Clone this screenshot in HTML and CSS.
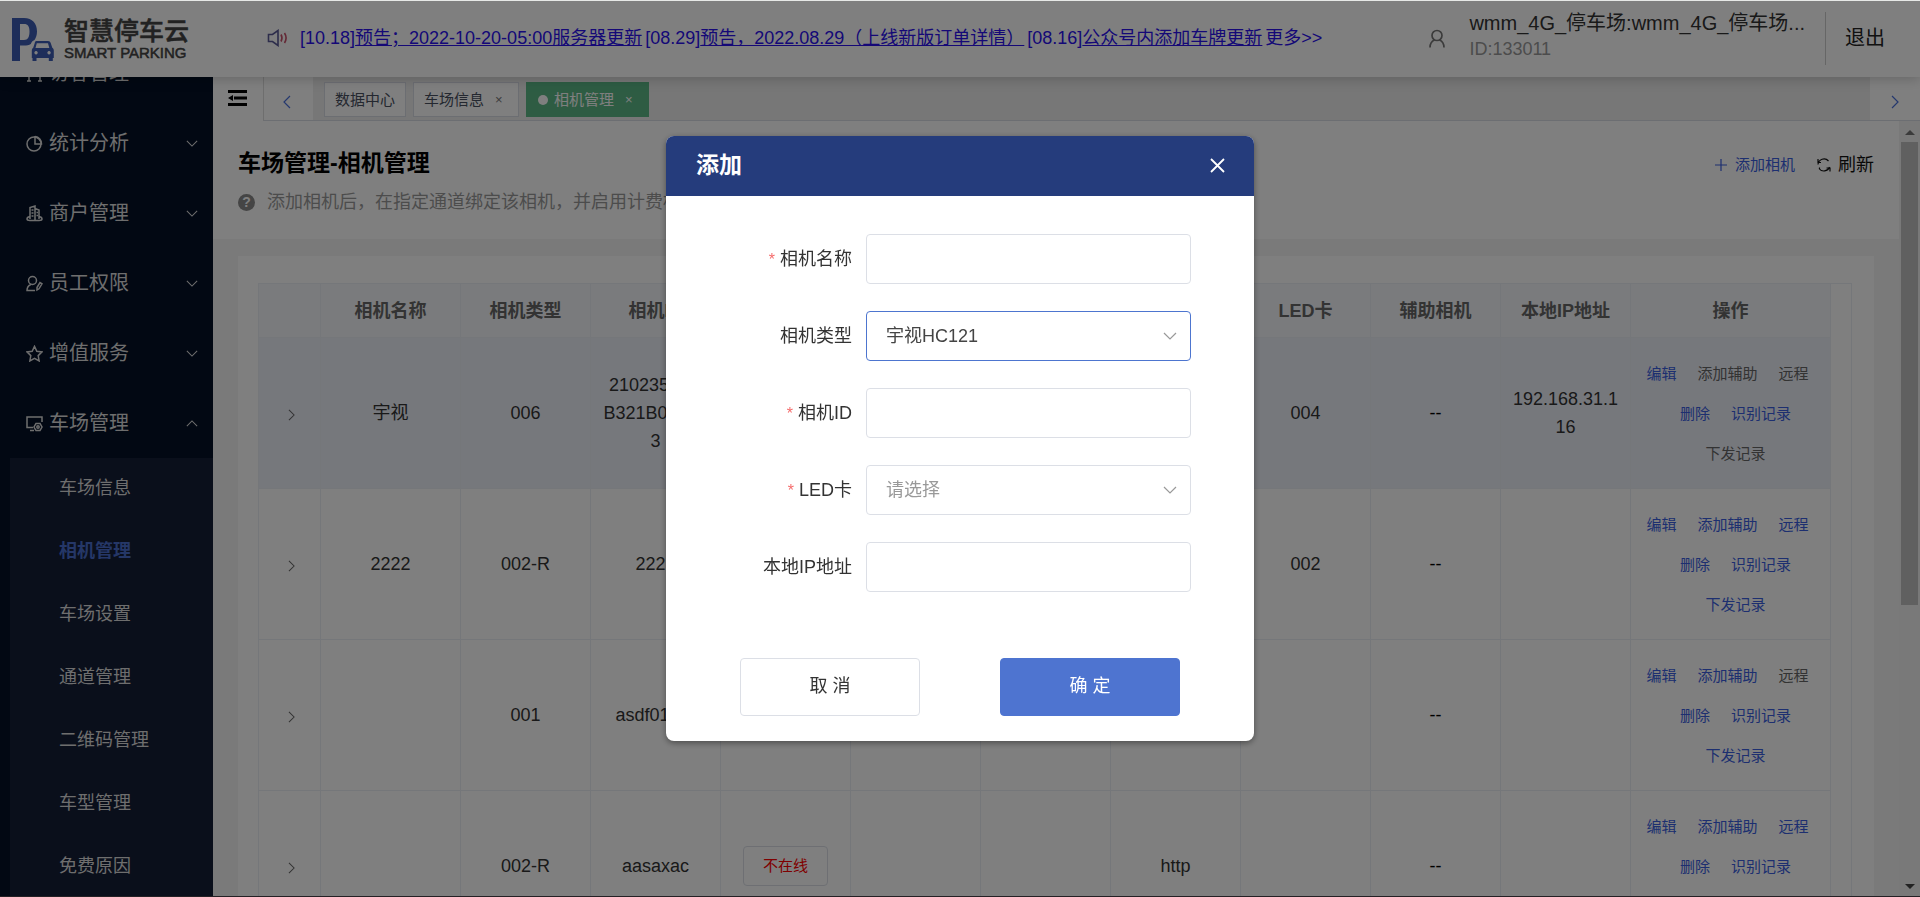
FILE: index.html
```html
<!DOCTYPE html>
<html lang="zh-CN">
<head>
<meta charset="utf-8">
<title>智慧停车云 - 相机管理</title>
<link rel="stylesheet" href="styles.css">
</head>
<body>
<svg class="defs" aria-hidden="true">
  <symbol id="chevron" viewBox="0 0 14 8"><path d="M1 1l6 6 6-6" fill="none" stroke="currentColor" stroke-width="1.2"/></symbol>
  <symbol id="angle" viewBox="0 0 8 14"><path d="M1 1l6 6-6 6" fill="none" stroke="currentColor" stroke-width="1.2"/></symbol>
</svg>

<header class="topbar">
  <a class="logo" href="#">
    <svg class="logo-mark" viewBox="0 0 42 44">
      <path fill="#3d5db5" fill-rule="evenodd" d="M0 0h12c8.500 0 13 5.500 13 13.500 0 3.500-1 6.500-2.500 8.500-2 .8-3 2-3.700 4-1.800 1-4 1.500-6.800 1.500H8V43H0zM8 6v16h4c4 0 5.500-3.500 5.500-8.500S16 6 12 6z"/>
      <path fill="#3d5db5" fill-rule="evenodd" d="M24 23h12c1.500 0 2.300.8 2.800 2.200l1.500 4.600c1 .7 1.500 1.700 1.500 3V40h-1v3h-4v-3H24.500v3h-4v-3h-.7v-7.200c0-1.300.5-2.300 1.400-3l1.500-4.600c.3-1.400 1-2.200 1.300-2.200zm.8 2.300L23.500 30h13.800L36 25.300zM24 33a1.700 1.700 0 1 0 .1 0zm13 0a1.700 1.700 0 1 0 .1 0z"/>
    </svg>
    <span class="logo-text"><strong>智慧停车云</strong><span>SMART PARKING</span></span>
  </a>
  <div class="notices">
    <svg class="speaker" viewBox="0 0 22 18">
      <path d="M1.500 5.500h4L11 1.500v15L5.500 12.500h-4z" fill="none" stroke="#5a5a96" stroke-width="1.600"/>
      <path d="M14 5.500q2 3.500 0 7M17.500 4q3.200 5 0 10" fill="none" stroke="#c8506a" stroke-width="1.600"/>
    </svg>
    <a href="#">[10.18]<u>预告；2022-10-20-05:00服务器更新</u></a>
    <a href="#">[08.29]<u>预告，2022.08.29（上线新版订单详情）</u></a>
    <a href="#">[08.16]<u>公众号内添加车牌更新</u></a>
    <a href="#">更多&gt;&gt;</a>
  </div>
  <div class="account">
    <svg class="user" viewBox="0 0 16 19"><circle cx="8" cy="6.500" r="5" fill="none" stroke="currentColor" stroke-width="1.700"/><path d="M5.500 11Q1 13 1 18.500M10.500 11Q15 13 15 18.500" fill="none" stroke="currentColor" stroke-width="1.700"/></svg>
    <div class="account-text"><span class="account-name">wmm_4G_停车场:wmm_4G_停车场...</span><span class="account-id">ID:133011</span></div>
    <a class="logout" href="#">退出</a>
  </div>
</header>

<div class="shell">
  <nav class="sidebar">
    <ul class="menu">
      <li><a class="menu-item" href="#"><svg class="menu-icon" viewBox="0 0 17 17"><path d="M3 16V4h11v12M1 16h4M12 16h4" /></svg><span>访客管理</span><svg class="caret"><use href="#chevron"/></svg></a></li>
      <li><a class="menu-item" href="#"><svg class="menu-icon" viewBox="0 0 17 17"><circle cx="8" cy="9" r="7"/><path d="M9 1v8h6.500A7 7 0 0 0 9 1.500"/></svg><span>统计分析</span><svg class="caret"><use href="#chevron"/></svg></a></li>
      <li><a class="menu-item" href="#"><svg class="menu-icon" viewBox="0 0 17 17"><path d="M4 14V2.500L9 1v14M9 3.500l4 1.500V14M4 11.500Q1 12 1 14q0 1.500 3 1.500h9q3 0 3-1.500 0-2-3-2.500M5.500 5h2M5.500 8h2M5.500 11h2M10.500 7.500h1.500M10.500 10.500h1.500"/></svg><span>商户管理</span><svg class="caret"><use href="#chevron"/></svg></a></li>
      <li><a class="menu-item" href="#"><svg class="menu-icon" viewBox="0 0 17 17"><circle cx="6.500" cy="5.500" r="4"/><path d="M5 9.500Q1 11 1 15.500h8M11 12.500l3-5 2 1.300-3 5-2 1.200z"/></svg><span>员工权限</span><svg class="caret"><use href="#chevron"/></svg></a></li>
      <li><a class="menu-item" href="#"><svg class="menu-icon" viewBox="0 0 17 17"><path d="M8.500 1.300l2.300 4.900 5.200.7-3.800 3.700.9 5.300-4.600-2.600-4.600 2.600.9-5.300L1 6.900l5.200-.7z"/></svg><span>增值服务</span><svg class="caret"><use href="#chevron"/></svg></a></li>
      <li><a class="menu-item" href="#"><svg class="menu-icon" viewBox="0 0 17 17"><path d="M16 7V2H1v10.500h6M4 15.500h4"/><path d="M10 8.500h4l2 3.500-2 3.500h-4L8 12z"/><circle cx="12" cy="12" r="1.200"/></svg><span>车场管理</span><svg class="caret caret-up"><use href="#chevron"/></svg></a>
        <ul class="submenu">
          <li><a href="#">车场信息</a></li>
          <li><a class="current" href="#">相机管理</a></li>
          <li><a href="#">车场设置</a></li>
          <li><a href="#">通道管理</a></li>
          <li><a href="#">二维码管理</a></li>
          <li><a href="#">车型管理</a></li>
          <li><a href="#">免费原因</a></li>
        </ul>
      </li>
    </ul>
  </nav>

  <div class="workspace">
    <div class="tabbar">
      <button class="fold" aria-label="收起菜单"><svg viewBox="0 0 19 16"><path d="M0 0h19v3H0zM6 6.500h13v3H6zM0 13h19v3H0zM0 8l5-3v6z"/></svg></button>
      <button class="tab-nav tab-prev" aria-label="向左"><svg><use href="#angle"/></svg></button>
      <div class="tabs">
        <a class="tab" href="#">数据中心</a>
        <a class="tab" href="#">车场信息<span class="tab-close">×</span></a>
        <a class="tab tab-active" href="#"><i class="dot"></i>相机管理<span class="tab-close">×</span></a>
      </div>
      <button class="tab-nav" aria-label="向右"><svg><use href="#angle"/></svg></button>
    </div>

    <div class="viewport">
      <main class="page">
        <section class="page-head">
          <div>
            <h1>车场管理-相机管理</h1>
            <p class="hint"><span class="hint-icon">?</span>添加相机后，在指定通道绑定该相机，并启用计费标准</p>
          </div>
          <div class="page-actions">
            <button class="add"><svg viewBox="0 0 14 14"><path d="M7 1v12M1 7h12"/></svg>添加相机</button>
            <button class="refresh"><svg viewBox="0 0 14 14"><path d="M2.500 12V9.500M12.500 9A6 6 0 0 1 2 10.500M1 6.500A6 6 0 0 1 11.500 3M1 1v3.500h3M13 13.500V10H9.500"/></svg>刷新</button>
          </div>
        </section>

        <section class="card">
          <div class="table-wrap">
            <table>
              <colgroup><col class="col-expand"><col class="col-name"><col span="9"><col class="col-ops"></colgroup>
              <thead>
                <tr><th></th><th>相机名称</th><th>相机类型</th><th>相机ID</th><th></th><th></th><th></th><th></th><th>LED卡</th><th>辅助相机</th><th>本地IP地址</th><th>操作</th></tr>
              </thead>
              <tbody>
                <tr class="hovered">
                  <td><svg class="expand"><use href="#angle"/></svg></td><td>宇视</td><td>006</td><td>210235TK3<br>B321B00013<br>3</td><td></td><td></td><td></td><td></td><td>004</td><td class="none">--</td><td>192.168.31.116</td>
                  <td class="ops"><div class="op-row"><button>编辑</button><button disabled>添加辅助</button><button disabled>远程</button></div><div class="op-row op-more"><button>删除</button><button>识别记录</button></div><div class="op-row op-more"><button disabled>下发记录</button></div></td>
                </tr>
                <tr>
                  <td><svg class="expand"><use href="#angle"/></svg></td><td>2222</td><td>002-R</td><td>2222</td><td></td><td></td><td></td><td></td><td>002</td><td class="none">--</td><td></td>
                  <td class="ops"><div class="op-row"><button>编辑</button><button>添加辅助</button><button>远程</button></div><div class="op-row op-more"><button>删除</button><button>识别记录</button></div><div class="op-row op-more"><button>下发记录</button></div></td>
                </tr>
                <tr>
                  <td><svg class="expand"><use href="#angle"/></svg></td><td></td><td>001</td><td>asdf01111</td><td></td><td></td><td></td><td></td><td></td><td class="none">--</td><td></td>
                  <td class="ops"><div class="op-row"><button>编辑</button><button>添加辅助</button><button disabled>远程</button></div><div class="op-row op-more"><button>删除</button><button>识别记录</button></div><div class="op-row op-more"><button>下发记录</button></div></td>
                </tr>
                <tr>
                  <td><svg class="expand"><use href="#angle"/></svg></td><td></td><td>002-R</td><td>aasaxac</td><td><span class="offline">不在线</span></td><td></td><td></td><td>http</td><td></td><td class="none">--</td><td></td>
                  <td class="ops"><div class="op-row"><button>编辑</button><button>添加辅助</button><button>远程</button></div><div class="op-row op-more"><button>删除</button><button>识别记录</button></div></td>
                </tr>
              </tbody>
            </table>
          </div>
        </section>
      </main>
      <div class="scrollbar" aria-hidden="true">
        <i class="arrow-up"></i>
        <div class="track"><div class="thumb"></div></div>
        <i class="arrow-down"></i>
      </div>
    </div>
  </div>
</div>

<div class="overlay">
  <form class="dialog" role="dialog" aria-labelledby="dialog-title">
    <div class="dialog-head">
      <h2 id="dialog-title">添加</h2>
      <button type="button" class="close" aria-label="关闭"><svg viewBox="0 0 15 15"><path d="M1 1l13 13M14 1L1 14"/></svg></button>
    </div>
    <div class="fields">
      <label class="required" for="cam-name">相机名称</label>
      <input id="cam-name" type="text">
      <label for="cam-type">相机类型</label>
      <div class="select-box">
        <select id="cam-type" class="focused"><option>宇视HC121</option></select>
        <svg><use href="#chevron"/></svg>
      </div>
      <label class="required" for="cam-id">相机ID</label>
      <input id="cam-id" type="text">
      <label class="required" for="led">LED卡</label>
      <div class="select-box">
        <select id="led" class="placeholder"><option>请选择</option></select>
        <svg><use href="#chevron"/></svg>
      </div>
      <label for="local-ip">本地IP地址</label>
      <input id="local-ip" type="text">
    </div>
    <div class="dialog-foot">
      <button type="button">取 消</button>
      <button type="button" class="primary">确 定</button>
    </div>
  </form>
</div>
</body>
</html>
```

FILE: styles.css
```css
* { box-sizing: border-box; }

body {
  margin: 0;
  height: 100vh;
  display: flex;
  flex-direction: column;
  overflow: hidden;
  border-top: 1px solid #e6e8e6;
  border-bottom: 1px solid #242024;
  background: #fff;
  color: #333;
  font: 18px/28px "Liberation Sans", "Noto Sans CJK SC", sans-serif;
}

ul { list-style: none; margin: 0; padding: 0; }
h1, h2, p { margin: 0; }
a { color: inherit; text-decoration: none; }
button { border: 0; padding: 0; background: none; font: inherit; color: inherit; }
.defs { display: none; }

/* Top bar */
.topbar {
  z-index: 1;
  flex: none;
  display: flex;
  align-items: center;
  height: 76px;
  padding-left: 12px;
  background: #fff;
  box-shadow: 0 2px 12px rgba(0, 0, 0, .2);
}
.logo { display: flex; align-items: center; gap: 10px; width: 255px; padding-top: 2px; }
.logo-mark { width: 42px; height: 44px; }
.logo-text { display: flex; flex-direction: column; color: #444; font-size: 15px; line-height: 18px; -webkit-text-stroke: 0.5px; }
.logo-text strong { font-size: 25px; line-height: 26px; font-weight: 500; }
.notices { display: flex; align-items: center; gap: 3px; color: #2a10ee; white-space: nowrap; padding-bottom: 2px; }
.speaker { width: 22px; height: 18px; margin-right: 8px; }
.account { display: flex; align-items: center; gap: 24px; margin-left: auto; padding-bottom: 2px; }
.user { width: 16px; height: 19px; color: #777; }
.account-text { display: flex; flex-direction: column; line-height: 26px; padding-bottom: 5px; white-space: nowrap; }
.account-name { font-size: 20px; color: #333; }
.account-id { color: #999; }
.logout { padding: 12px 35px 13px 19px; border-left: 1px solid #ccc; font-size: 20px; margin-left: -4px; color: #222; }

.shell { flex: 1; min-height: 0; display: flex; }

/* Side menu */
.sidebar { flex: none; width: 213px; overflow: hidden; background: #041026; color: #ddd; }
.menu { margin-top: -39px; }
.menu-item { display: flex; align-items: center; gap: 6px; height: 70px; padding: 0 15px 0 26px; font-size: 20px; }
.menu-icon { width: 17px; height: 17px; fill: none; stroke: currentColor; stroke-width: 1.5; }
.caret { width: 12px; height: 7px; margin-left: auto; }
.caret-up { transform: rotate(180deg); }
.submenu { margin-left: 10px; background: #141e36; display: grid; gap: 5px; padding: 1px 0 40px; }
.submenu a { display: block; padding-left: 49px; line-height: 58px; }
.submenu .current { color: #4a6fcf; font-weight: bold; }

/* Tabs */
.workspace { flex: 1; min-width: 0; display: flex; flex-direction: column; }
.tabbar { flex: none; display: flex; height: 44px; }
.fold { width: 50px; display: grid; place-content: start center; padding: 13px 1px 0 0; }
.fold svg { width: 19px; height: 16px; fill: #000; }
.tab-nav { width: 50px; display: grid; place-content: center; border-bottom: 1px solid #d8dce5; color: #4a70dc; }
.tab-nav svg { width: 8px; height: 14px; margin-top: 7px; }
.tab-prev { border-left: 1px solid #ddd; padding-right: 3px; }
.tab-prev svg { transform: rotate(180deg); }
.tabs { flex: 1; display: flex; gap: 7px; padding: 5px 11px 3px; background: #eee; border-bottom: 1px solid #d8dce5; }
.tab { display: flex; align-items: center; padding: 0 10px; border: 1px solid #d8dce5; background: #fff; font-size: 15px; color: #495060; }
.tab-close { width: 24px; padding-left: 11px; font-size: 13px; color: #777; }
.tab-active { background: #5cb987; border-color: #5cb987; color: #fff; }
.tab-active .tab-close { color: #fff; }
.dot { width: 10px; height: 10px; border-radius: 50%; background: #fff; margin: 0 6px 0 1px; }

/* Page */
.viewport { flex: 1; min-height: 0; display: flex; background: #f4f4f4; }
.page { flex: 1; min-width: 0; overflow: hidden; }
.page-head { display: flex; justify-content: space-between; height: 118px; padding: 27px 25px 0; background: #fff; }
.page-head h1 { font-size: 23px; line-height: 30px; color: #000; }
.hint { display: flex; align-items: center; gap: 12px; margin-top: 10px; color: #999; white-space: nowrap; }
.hint-icon { width: 17px; height: 17px; border-radius: 50%; background: #8a8a8a; color: #fff; font-size: 14px; font-weight: bold; line-height: 17px; text-align: center; }
.page-actions { display: flex; align-items: flex-start; gap: 22px; padding-top: 3px; }
.page-actions button { display: flex; align-items: center; gap: 7px; line-height: 28px; }
.page-actions svg { width: 14px; height: 14px; fill: none; stroke: currentColor; stroke-width: 1.2; }
.page-actions .add { color: #3a5ee0; font-size: 15px; }
.page-actions .refresh { color: #111; }

.card { margin: 17px 25px 0; padding: 27px 22px 40px 20px; background: #fff; }
.table-wrap { border: 1px solid #ebeef5; padding-right: 20px; }
table { width: 100%; table-layout: fixed; border-spacing: 0; text-align: center; }
.col-expand { width: 62px; }
.col-name { width: 140px; }
.col-ops { width: 200px; }
th, td { padding: 0 10px; border-right: 1px solid #ebeef5; border-bottom: 1px solid #ebeef5; overflow-wrap: anywhere; }
th { height: 54px; background: #f5f7fa; color: #666; }
td { height: 151px; }
.hovered td { background: #edf0f9; }
.none { color: #000; }
.expand { display: block; width: 7px; height: 12px; margin: 3px 0 0 19px; color: #666; }
.ops { padding: 0 6px 0 0; font-size: 15px; vertical-align: top; padding-top: 16px; }
.op-row { display: flex; justify-content: center; gap: 21px; line-height: 40px; }
.op-more { padding-left: 16px; }
.op-row button { color: #3a5ee0; }
.op-row button:disabled { color: #666; }
.offline { display: inline-block; padding: 5px 19px; border: 1px solid #dcdfe6; border-radius: 4px; color: #f00; font-size: 15px; }

.scrollbar { width: 21px; display: flex; flex-direction: column; align-items: center; padding: 9px 0 7px; background: #f2f2f2; }
.arrow-up, .arrow-down { border: 5px solid transparent; border-top: 0; border-bottom-color: #777; }
.arrow-down { border: 5px solid transparent; border-bottom: 0; border-top-color: #444; }
.track { flex: 1; width: 17px; margin: 7px 0; }
.thumb { height: 63%; background: #c1c1c1; }

/* Dialog */
.overlay { position: fixed; z-index: 2; inset: 1px 0; display: flex; justify-content: center; align-items: flex-start; padding-top: 135px; background: rgba(0, 0, 0, .5); }
.dialog { width: 588px; border-radius: 8px; overflow: hidden; background: #fff; box-shadow: 0 2px 6px rgba(0, 0, 0, .4); }
.dialog-head { display: flex; justify-content: space-between; align-items: center; height: 60px; padding: 0 29px 2px 30px; background: #253c7c; color: #fff; }
.dialog-head h2 { font-size: 23px; }
.close svg { display: block; width: 15px; height: 15px; fill: none; stroke: currentColor; stroke-width: 1.8; }
.fields { display: grid; grid-template-columns: 186px 325px; gap: 27px 14px; align-items: center; padding-top: 38px; }
.fields label { text-align: right; }
.required::before { content: "*"; margin-right: 5px; color: #f56c6c; font-size: 16px; }
.fields input, .fields select { width: 100%; height: 50px; padding: 0 19px; border: 1px solid #dcdfe6; border-radius: 4px; background: #fff; color: #444; font: inherit; appearance: none; outline: 0; }
.fields select.focused { border-color: #4d75cf; }
.fields select.placeholder { color: #999; }
.select-box { display: grid; align-items: center; }
.select-box > * { grid-area: 1 / 1; }
.select-box svg { justify-self: end; width: 14px; height: 8px; margin-right: 14px; color: #999; pointer-events: none; }
.dialog-foot { display: flex; justify-content: center; gap: 80px; padding: 66px 0 25px; }
.dialog-foot button { width: 180px; height: 58px; padding-bottom: 2px; border: 1px solid #dcdfe6; border-radius: 4px; }
.dialog-foot .primary { border-color: #4e74d0; background: #4e74d0; color: #fff; }
```
